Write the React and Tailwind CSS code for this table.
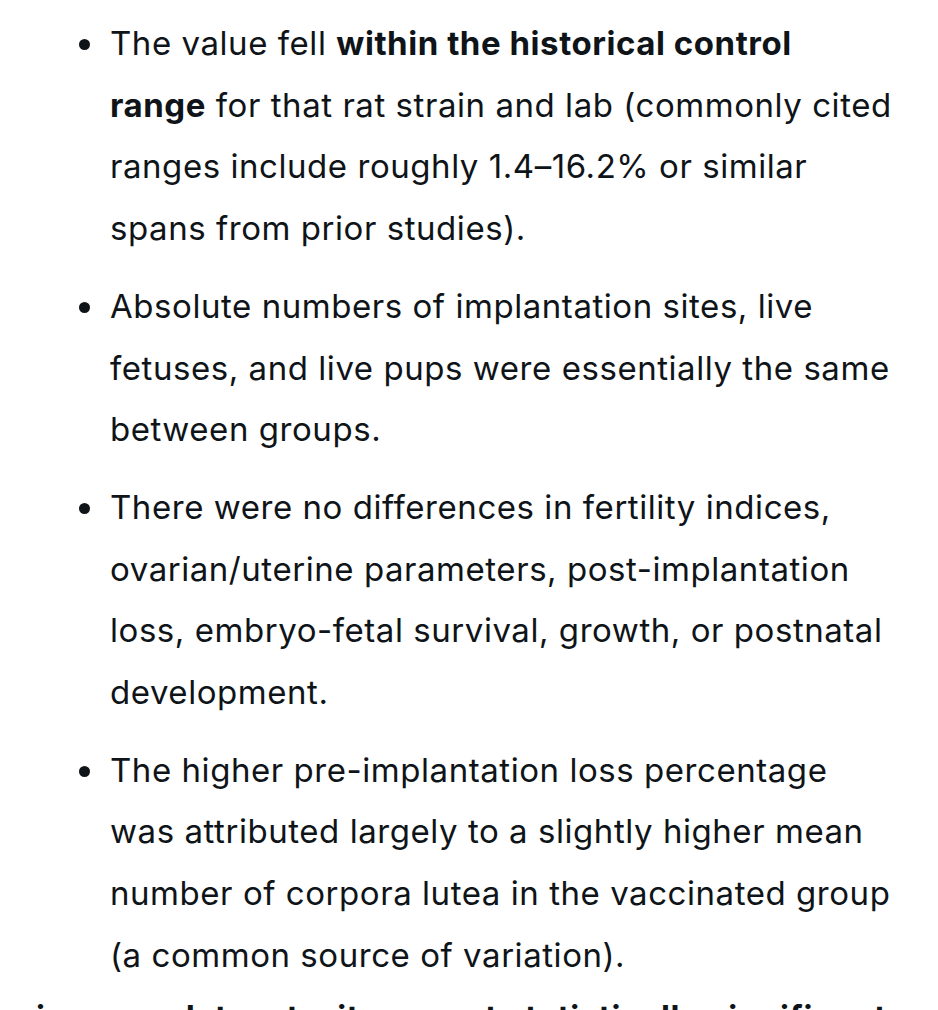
const items = [
  [
    <>
      The value fell <strong className="font-bold">within the historical control</strong>
    </>,
    <>
      <strong className="font-bold">range</strong> for that rat strain and lab (commonly cited
    </>,
    "ranges include roughly 1.4–16.2% or similar",
    "spans from prior studies).",
  ],
  [
    "Absolute numbers of implantation sites, live",
    "fetuses, and live pups were essentially the same",
    "between groups.",
  ],
  [
    "There were no differences in fertility indices,",
    "ovarian/uterine parameters, post-implantation",
    "loss, embryo-fetal survival, growth, or postnatal",
    "development.",
  ],
  [
    "The higher pre-implantation loss percentage",
    "was attributed largely to a slightly higher mean",
    "number of corpora lutea in the vaccinated group",
    "(a common source of variation).",
  ],
];

export default function App() {
  return (
    <div className="h-[1010px] w-[938px] overflow-hidden bg-white text-[#0f1419] font-['Inter',sans-serif]">
      <ul className="pt-[13px] pl-[110px] pr-4 flex flex-col gap-[16px]">
        {items.map((lines, i) => (
          <li key={i} className="relative text-[33px] leading-[61.7px] tracking-[0.55px]">
            <span className="absolute left-[-31px] top-[26px] w-[11px] h-[11px] rounded-full bg-[#0f1419]" />
            {lines.map((line, j) => (
              <span key={j} className="block whitespace-nowrap">
                {line}
              </span>
            ))}
          </li>
        ))}
      </ul>
      <p className="mt-[0px] pl-[36px] text-[33px] leading-[61.7px] tracking-[0.55px] font-bold whitespace-nowrap">
        in some datasets, it was not statistically significant
      </p>
    </div>
  );
}
